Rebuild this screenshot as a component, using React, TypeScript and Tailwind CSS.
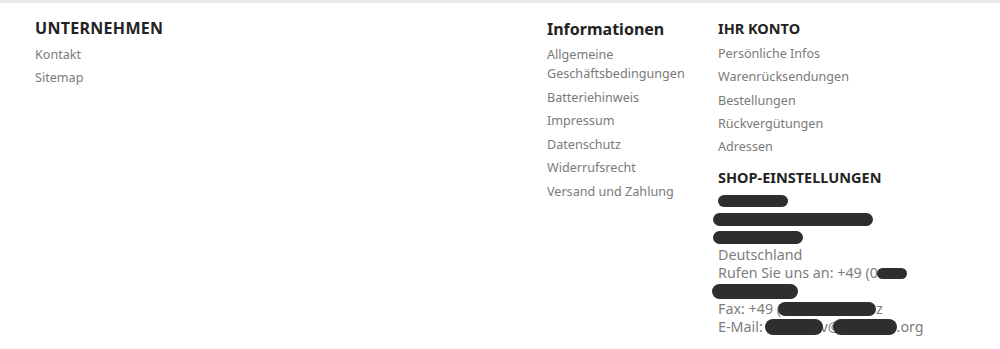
const linkCls = "block text-[12.6px] leading-[19px] text-[#7a7a7a] hover:text-[#2fb5d2]";

function Blob({ w, h = 12, className = "" }: { w: number; h?: number; className?: string }) {
  return (
    <span
      className={`inline-block shrink-0 rounded-full bg-[#2e2e2e] blur-[0.6px] ${className}`}
      style={{ width: w, height: h }}
    />
  );
}

export default function App() {
  const infos = [
    ["Allgemeine", "Geschäftsbedingungen"],
    ["Batteriehinweis"],
    ["Impressum"],
    ["Datenschutz"],
    ["Widerrufsrecht"],
    ["Versand und Zahlung"],
  ];
  const konto = ["Persönliche Infos", "Warenrücksendungen", "Bestellungen", "Rückvergütungen", "Adressen"];

  return (
    <div className="min-h-[349px] bg-white border-t-[3px] border-[#ebebeb] font-['Noto_Sans',sans-serif]">
      <div className="flex pl-[35px] pt-[15px]">
        {/* Unternehmen */}
        <div className="w-[512px]">
          <h4 className="text-[16px] leading-[20px] font-bold uppercase text-[#232323] tracking-[0.3px]">Unternehmen</h4>
          <ul className="mt-[7px] space-y-[4px]">
            <li><a className={linkCls}>Kontakt</a></li>
            <li><a className={linkCls}>Sitemap</a></li>
          </ul>
        </div>

        {/* Informationen */}
        <div className="w-[171px]">
          <h4 className="text-[16px] leading-[22px] font-bold text-[#232323]">Informationen</h4>
          <ul className="mt-[5px] space-y-[4.5px]">
            {infos.map((it) => (
              <li key={it[0]}>
                <a className={linkCls}>
                  {it.map((l) => (
                    <span key={l} className="block">{l}</span>
                  ))}
                </a>
              </li>
            ))}
          </ul>
        </div>

        {/* Ihr Konto + Shop */}
        <div className="flex-1">
          <h4 className="text-[14.5px] leading-[20px] font-bold uppercase text-[#232323]">Ihr Konto</h4>
          <ul className="mt-[6px] space-y-[4.3px]">
            {konto.map((k) => (
              <li key={k}><a className={linkCls}>{k}</a></li>
            ))}
          </ul>
          <h4 className="mt-[11px] text-[14.5px] leading-[20px] font-bold uppercase text-[#232323]">Shop-Einstellungen</h4>
          <div className="mt-[5px] text-[14.3px] leading-[18px] text-[#7d7d7d]">
            <div className="h-[18px] flex items-center"><Blob w={70} /></div>
            <div className="h-[18px] flex items-center -ml-[5px]"><Blob w={160} h={13} /></div>
            <div className="h-[18px] flex items-center -ml-[5px]"><Blob w={90} h={13} /></div>
            <div className="h-[18px]">Deutschland</div>
            <div className="h-[18px] flex items-center whitespace-pre">Rufen Sie uns an: +49 (0<Blob w={30} h={11} className="-ml-[1px]" /></div>
            <div className="h-[18px] flex items-center -ml-[6px]"><Blob w={86} h={15} /></div>
            <div className="h-[18px] flex items-center whitespace-pre">Fax: +49 (<Blob w={98} h={14} className="-ml-[3px]" />z</div>
            <div className="h-[18px] flex items-center whitespace-pre">E-Mail: <Blob w={58} h={16} className="-ml-[1px]" /><span className="-ml-[3px]">v@</span><Blob w={64} h={16} className="-ml-[8px]" />.org</div>
          </div>
        </div>
      </div>
    </div>
  );
}
